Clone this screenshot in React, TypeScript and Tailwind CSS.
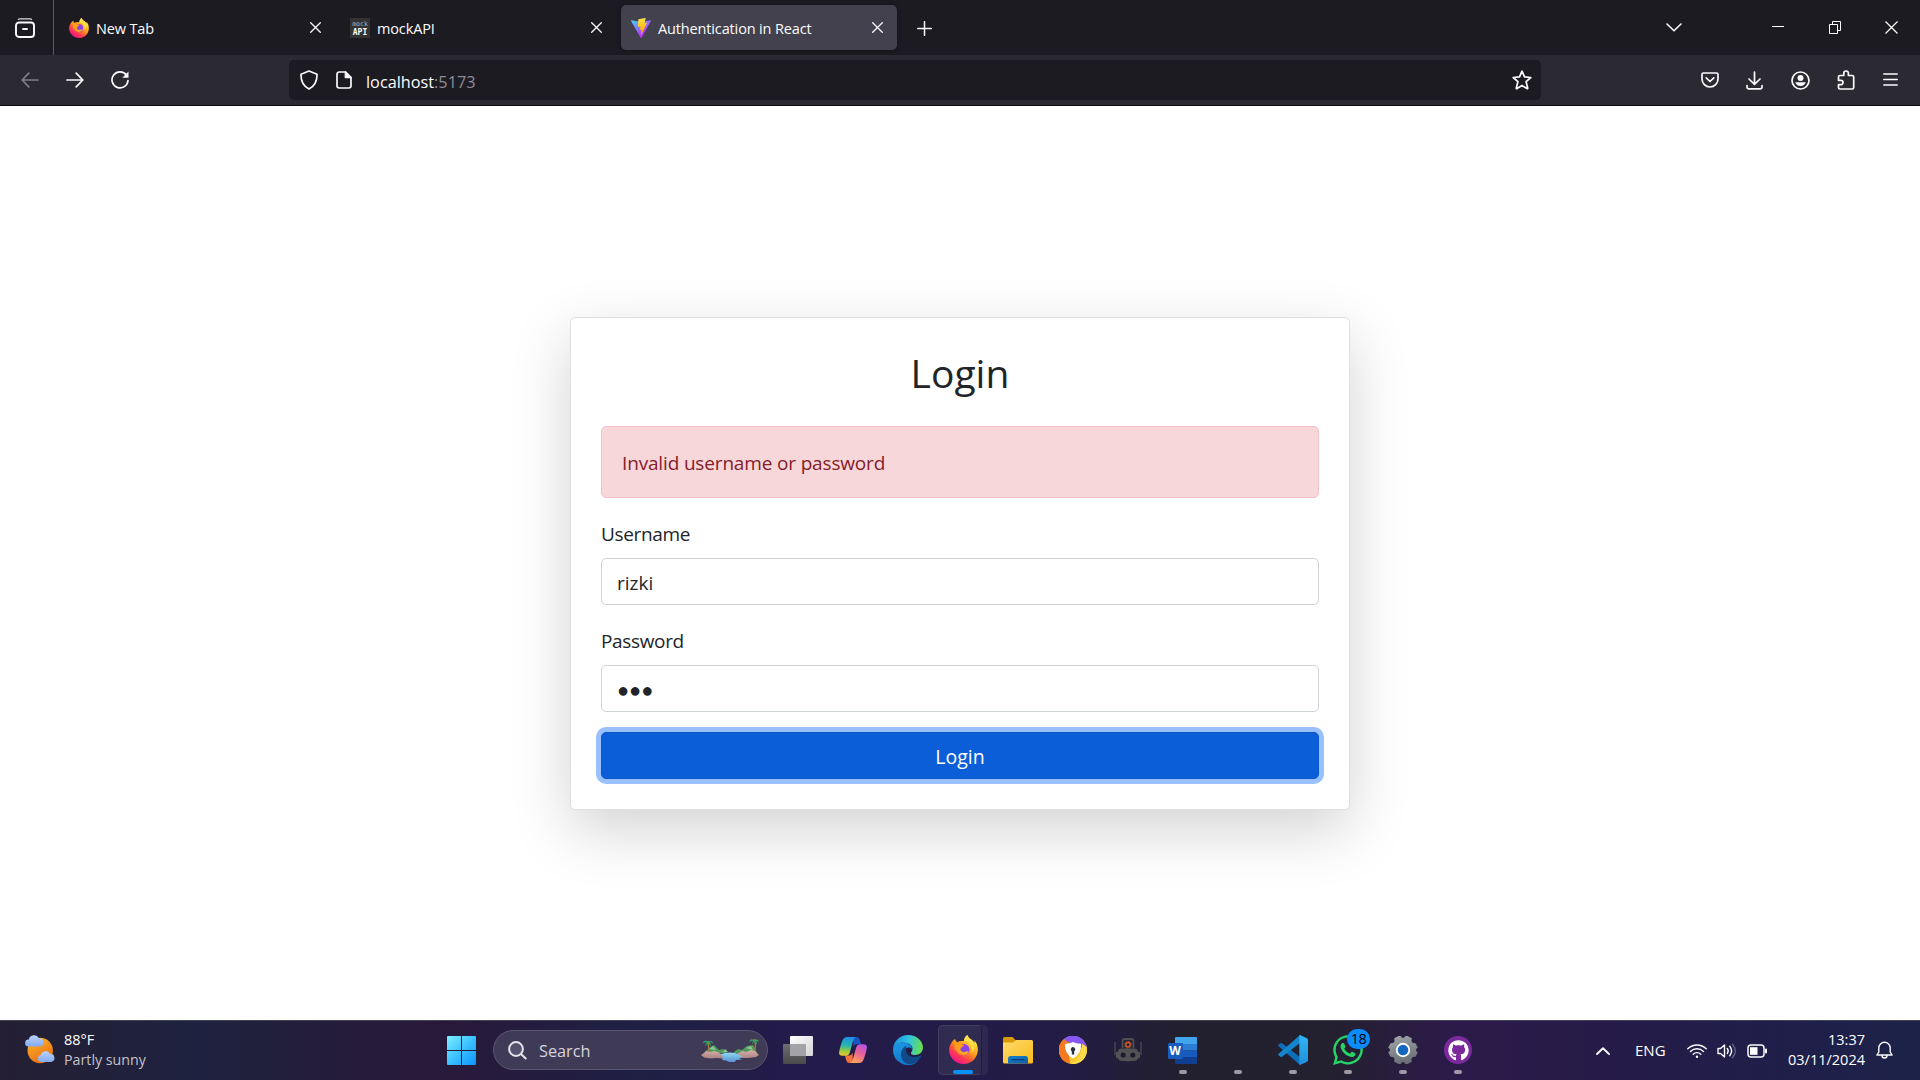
import type { ReactNode } from "react";
import { FaGithub, FaWhatsapp } from "react-icons/fa";

/* ---------- logos ---------- */

function FirefoxLogo({ size, id }: { size: number; id: string }) {
  return (
    <svg width={size} height={size} viewBox="0 0 32 32">
      <defs>
        <linearGradient id={id + "a"} x1="0.85" y1="0.1" x2="0.25" y2="0.95">
          <stop offset="0" stopColor="#fff44f" />
          <stop offset="0.25" stopColor="#ffc52a" />
          <stop offset="0.5" stopColor="#ff8a1f" />
          <stop offset="0.75" stopColor="#ff3c50" />
          <stop offset="1" stopColor="#f2128a" />
        </linearGradient>
        <linearGradient id={id + "b"} x1="0.6" y1="0" x2="0.4" y2="1">
          <stop offset="0" stopColor="#a13fe0" />
          <stop offset="1" stopColor="#6a48e8" />
        </linearGradient>
        <linearGradient id={id + "c"} x1="0" y1="0" x2="1" y2="1">
          <stop offset="0" stopColor="#ff980e" />
          <stop offset="1" stopColor="#ffa52e" />
        </linearGradient>
      </defs>
      <path
        fill={`url(#${id}a)`}
        d="M20.300 0c-2.600 1.600-3.600 4.400-3.700 6.400-2.100.1-4 .9-5.400 2C9 8.200 7.300 6.800 6.700 4.300 4.900 5.200 3.500 6.800 2.600 8.800.9 11 0 14 .2 17.300.8 25.600 7.600 32 16 32c8.800 0 15.800-7 15.800-15.800 0-4.200-1.400-8-4-10.400.4 1 .6 2 .6 2.900C26.200 4.600 21.400 4.300 20.300 0z"
      />
      <circle cx="16.200" cy="16" r="6.400" fill={`url(#${id}b)`} />
      <path
        fill={`url(#${id}c)`}
        d="M3 8.500c1.500-.8 3.500-.8 5.200-.1 2-1.500 4.500-2.200 7-1.700-1.700.8-2.600 2.300-2.500 3.300.7.600 3.500.5 3.800 1.100-.2 1.700-3.300 2.400-3.900 3.900-.3 2.600 2.300 4.200 4.800 3.600 1.600-.4 3-1 4.300-.2-1 2.500-3.700 4-6.600 3.800-4-.3-6.900-3.300-7-6.700-.7.700-1 1.700-1 2.800-1.600-2.800-1-6.200-.6-7.400z"
      />
      <path
        fill="#ffe14a"
        opacity="0.85"
        d="M20.300 0c-2.600 1.600-3.600 4.400-3.700 6.400 4 .2 7.500 3.100 7.900 7.200 1 2.400.5 5-.4 6.500 2.700-1.500 4.200-5 3.700-9.400C26.200 6 21.400 4.500 20.300 0z"
      />
    </svg>
  );
}

function ViteLogo() {
  return (
    <svg width="20" height="20" viewBox="0 0 256 257">
      <defs>
        <linearGradient id="va" x1="-0.828%" x2="57.636%" y1="7.652%" y2="78.411%">
          <stop offset="0" stopColor="#41d1ff" />
          <stop offset="1" stopColor="#bd34fe" />
        </linearGradient>
        <linearGradient id="vb" x1="43.376%" x2="50.316%" y1="2.242%" y2="89.03%">
          <stop offset="0" stopColor="#ffea83" />
          <stop offset="0.083" stopColor="#ffdd35" />
          <stop offset="1" stopColor="#ffa800" />
        </linearGradient>
      </defs>
      <path
        fill="url(#va)"
        d="M255.153 37.938L134.897 252.976c-2.483 4.440-8.862 4.466-11.382.048L.875 37.958c-2.746-4.814 1.371-10.646 6.827-9.670l120.385 21.517a6.537 6.537 0 0 0 2.322-.004l117.867-21.483c5.438-.991 9.574 4.796 6.877 9.620Z"
      />
      <path
        fill="url(#vb)"
        d="M185.432.063L96.440 17.501a3.268 3.268 0 0 0-2.634 3.014l-5.474 92.456a3.268 3.268 0 0 0 3.997 3.378l24.777-5.718c2.318-.535 4.413 1.507 3.936 3.838l-7.361 36.047c-.495 2.426 1.782 4.500 4.151 3.780l15.304-4.649c2.372-.720 4.652 1.360 4.150 3.788l-11.698 56.621c-.732 3.542 3.979 5.473 5.943 2.437l1.313-2.028l72.516-144.720c1.215-2.423-.880-5.186-3.540-4.672l-25.505 4.922c-2.396.462-4.435-1.770-3.759-4.114l16.646-57.705c.677-2.350-1.370-4.583-3.769-4.113Z"
      />
    </svg>
  );
}

/* ---------- browser chrome ---------- */

const line = {
  fill: "none",
  stroke: "#fbfbfe",
  strokeWidth: 1.7,
  strokeLinecap: "round" as const,
  strokeLinejoin: "round" as const,
};

function CloseX() {
  return (
    <svg width="11" height="11" viewBox="0 0 11 11" {...line} strokeWidth={1.3}>
      <path d="M.7.7l9.600 9.600M10.300.7L.7 10.300" />
    </svg>
  );
}

function Tab({ icon, title, wide, active }: { icon: ReactNode; title: string; wide?: boolean; active?: boolean }) {
  return (
    <div
      className={
        "flex h-[45px] items-center rounded-[5px] pl-[10px] " +
        (active ? "bg-[#42414d] shadow-[0_0_4px_rgba(0,0,0,0.4)] " : "") +
        (wide ? "w-[281px] pr-[19px]" : "w-[276px] pr-[14px]")
      }
    >
      <div className="flex size-5 items-center justify-center pt-[1px]">{icon}</div>
      <span className="flex-1 whitespace-nowrap pt-[2px] pl-[7px] text-[14.500px] leading-5 tracking-[-0.14px] text-[#fbfbfe]">
        {title}
      </span>
      <CloseX />
    </div>
  );
}

function TabStrip() {
  return (
    <div className="flex h-[55px] items-center bg-[#1c1b22]">
      <div className="flex h-full w-[54px] items-center border-r border-[#5b5b66] pt-[1px] pl-[15px]">
        <svg width="20" height="20" viewBox="0 0 20 20" {...line} strokeWidth={1.900}>
          <path d="M3.500 1.300Q4 .9 5 .9h10q1 0 1.500.4" strokeWidth={1.300} opacity={0.85} />
          <rect x="1" y="4.500" width="18" height="14.500" rx="3" />
          <path d="M8 11h4" />
        </svg>
      </div>
      <div className="flex pl-[5px]">
        <Tab wide icon={<FirefoxLogo size={20} id="ft" />} title="New Tab" />
        <Tab
          wide
          icon={
            <div className="flex size-5 flex-col items-center justify-center bg-[#333] font-['DejaVu_Sans_Mono',monospace]">
              <span className="text-[6.500px] leading-[8px] text-[#a3b3be]">mock</span>
              <span className="text-[8px] leading-[9px] font-bold text-white">API</span>
            </div>
          }
          title="mockAPI"
        />
        <Tab active icon={<ViteLogo />} title="Authentication in React" />
      </div>
      <svg className="mt-[2px] ml-5" width="15" height="15" viewBox="0 0 15 15" {...line} strokeWidth={1.500}>
        <path d="M7.500.7v13.600M.7 7.500h13.600" />
      </svg>
      <div className="flex-1" />
      <svg className="mr-[90px]" width="16" height="9" viewBox="0 0 16 9" {...line} strokeWidth={1.600}>
        <path d="M1 1l7 6.800L15 1" />
      </svg>
      <svg className="mr-[45px] -mt-[2px]" width="12" height="1" viewBox="0 0 12 1">
        <path d="M0 .5h12" stroke="#fff" />
      </svg>
      <svg className="mr-[44px]" width="12" height="13" viewBox="0 0 12 13" fill="none" stroke="#fff">
        <path d="M.5 3.500h8v9h-8zM3.500 3.500v-3h8v9h-3" />
      </svg>
      <svg className="mr-[22px]" width="13" height="13" viewBox="0 0 13 13" fill="none" stroke="#fff" strokeWidth={1.200}>
        <path d="M.5.5l12 12M12.500.5l-12 12" />
      </svg>
    </div>
  );
}

function Toolbar() {
  return (
    <div className="flex h-[51px] items-center border-b border-[#0c0c0d] bg-[#2b2a33]">
      <svg className="ml-[21px]" width="18" height="16" viewBox="0 0 18 16" {...line} opacity={0.4}>
        <path d="M17 8H1.200M7.800 1.200L1.200 8l6.600 6.800" />
      </svg>
      <svg className="ml-[27px]" width="18" height="16" viewBox="0 0 18 16" {...line}>
        <path d="M1 8h15.800M10.200 1.200L16.800 8l-6.600 6.800" />
      </svg>
      <svg className="ml-[27px]" width="18" height="18" viewBox="0 0 18 18" {...line}>
        <path d="M15.500 4.200A8 8 0 1 0 17 9.500" />
        <path d="M17.500.5v6.200h-6.200z" fill="#fbfbfe" stroke="none" />
      </svg>
      <div className="ml-[160px] flex h-10 w-[1252px] items-center rounded-[5px] bg-[#1c1b22] pr-[9px] pl-[11px]">
        <svg width="18" height="20" viewBox="0 0 18 20" {...line}>
          <path d="M9 1l8 3.200c.2 6-1.500 11.500-8 14.900C2.500 15.700.8 10.200 1 4.200z" />
        </svg>
        <svg className="ml-[18px]" width="16" height="18" viewBox="0 0 16 18" {...line}>
          <path d="M3.200 1h6.300L15 6.500v8.300a2.200 2.200 0 0 1-2.200 2.200H3.200A2.200 2.200 0 0 1 1 14.800V3.200A2.200 2.200 0 0 1 3.200 1z" />
          <path d="M9.500 1v5.500H15z" fill="#fbfbfe" />
        </svg>
        <span className="flex-1 pt-[4px] pl-[14px] text-[16.250px] leading-6 text-[#fbfbfe]">
          localhost<span className="text-[#8d8c96]">:5173</span>
        </span>
        <svg width="20" height="20" viewBox="0 0 20 20" {...line}>
          <path d="M10 1.200l2.500 5.700 6.300.6-4.700 4.200 1.600 6.300q.2 1-.7.600L10 15.600l-5 3q-.9.400-.7-.6l1.600-6.300L1.200 7.500l6.300-.6z" />
        </svg>
      </div>
      <div className="flex flex-1 items-center justify-end pr-[22px]">
        <svg width="18" height="16" viewBox="0 0 18 16" {...line}>
          <path d="M2.500 1h13Q17 1 17 2.500V7a8 8 0 0 1-16 0V2.500Q1 1 2.500 1zM5.200 5.800L9 9.500l3.800-3.700" />
        </svg>
        <svg className="ml-[27px]" width="17" height="19" viewBox="0 0 17 19" {...line}>
          <path d="M8.500 1v12M3 8l5.500 5.300L14 8M1 14.500v1.700q0 1.600 1.600 1.600h11.800q1.600 0 1.600-1.600v-1.700" />
        </svg>
        <svg className="ml-[28px]" width="19" height="19" viewBox="0 0 19 19" {...line}>
          <circle cx="9.500" cy="9.500" r="8.500" />
          <circle cx="9.500" cy="7" r="3" fill="#fbfbfe" stroke="none" />
          <path d="M4.300 11.300h10.400c-.6 2.300-2.600 3.800-5.200 3.800s-4.600-1.500-5.200-3.800z" fill="#fbfbfe" stroke="none" />
        </svg>
        <svg className="ml-[27px]" width="18" height="20" viewBox="0 0 18 20" {...line}>
          <path d="M6.800 5.500V3.300a2.300 2.300 0 0 1 4.600 0v2.200h3.800q1.500 0 1.500 1.500v10.500q0 1.500-1.500 1.500H3q-1.500 0-1.500-1.500v-2.800h2.300a2.200 2.200 0 0 0 0-4.400H1.500V7Q1.500 5.500 3 5.500z" />
        </svg>
        <svg className="ml-[28px] -mt-[1px]" width="15" height="13" viewBox="0 0 15 13" {...line} strokeWidth={1.500}>
          <path d="M.8 1h13.400M.8 6.500h13.400M.8 12h13.400" />
        </svg>
      </div>
    </div>
  );
}

/* ---------- page ---------- */

function Field({ label, children }: { label: string; children: ReactNode }) {
  return (
    <div className="mb-5">
      <div className="mb-[10px] h-[30px] pt-[1px] text-[19px] leading-[30px] tracking-[-0.35px]">{label}</div>
      <div className="h-[47px] rounded-[5px] border border-[#ced4da] bg-white pt-[1px] pl-[15px] leading-[46px]">
        {children}
      </div>
    </div>
  );
}

function LoginPage() {
  return (
    <main className="flex flex-1 items-center justify-center bg-white pt-[1px] text-[#212529]">
      <div className="w-[780px] rounded-[5px] border border-[#dfdfdf] bg-white p-[30px] shadow-[0_20px_60px_rgba(0,0,0,0.175)]">
        <h2 className="mb-[30px] h-12 pt-[1px] text-center text-[39px] leading-[48px]">Login</h2>
        <div className="mb-5 h-[72px] rounded-[5px] border border-[#f5c2c7] bg-[#f8d7da] pt-[1px] pl-5 text-[19px] leading-[70px] tracking-[-0.16px] text-[#842029]">
          Invalid username or password
        </div>
        <Field label="Username">
          <span className="text-[19px]">rizki</span>
        </Field>
        <Field label="Password">
          <span className="text-[20px]">●●●</span>
        </Field>
        <button className="block h-[47px] w-full rounded-[5px] border border-[#0a58ca] bg-[#0b5ed7] pt-[2px] text-[19.500px] leading-[44px] text-white shadow-[0_0_0_5px_#98c1fe]">
          Login
        </button>
      </div>
    </main>
  );
}

/* ---------- taskbar ---------- */

function WeatherIcon() {
  return (
    <svg width="30" height="30" viewBox="0 0 30 30">
      <defs>
        <linearGradient id="sun" x1="0.2" y1="0" x2="0.7" y2="1">
          <stop offset="0" stopColor="#f8b42a" />
          <stop offset="1" stopColor="#ee6a12" />
        </linearGradient>
        <linearGradient id="cloud" x1="0" y1="0" x2="0" y2="1">
          <stop offset="0" stopColor="#b9d2fb" />
          <stop offset="1" stopColor="#83aaf0" />
        </linearGradient>
      </defs>
      <circle cx="15.200" cy="15.500" r="12.700" fill="url(#sun)" />
      <path fill="url(#cloud)" d="M3.500 11.500a3.500 3.500 0 0 1 .3-7A5.500 5.500 0 0 1 14 3.200a4.200 4.200 0 0 1 1 8.300z" />
      <path fill="url(#cloud)" d="M15.500 27a3.600 3.600 0 0 1 .2-7 5 5 0 0 1 9.300-1.200A4.200 4.200 0 0 1 26.500 27z" />
    </svg>
  );
}

function StartIcon() {
  return (
    <svg width="29" height="29" viewBox="0 0 29 29">
      <defs>
        <linearGradient id="win" gradientUnits="userSpaceOnUse" x1="0" y1="0" x2="29" y2="29">
          <stop offset="0" stopColor="#7df0ff" />
          <stop offset="0.5" stopColor="#3cc0ff" />
          <stop offset="1" stopColor="#0a93f8" />
        </linearGradient>
      </defs>
      <path
        fill="url(#win)"
        d="M1 0h13v14H0V1Q0 0 1 0zM15 0h13q1 0 1 1v13H15zM0 15h14v14H1q-1 0-1-1zM15 15h14v13q0 1-1 1H15z"
      />
    </svg>
  );
}

function IslandsArt() {
  return (
    <svg width="58" height="26" viewBox="0 0 58 26">
      <defs>
        <linearGradient id="water" x1="0" y1="0" x2="0" y2="1">
          <stop offset="0" stopColor="#8fdcf2" />
          <stop offset="1" stopColor="#5a8fd0" />
        </linearGradient>
        <linearGradient id="rock" x1="0" y1="0" x2="0" y2="1">
          <stop offset="0" stopColor="#d9b3a6" />
          <stop offset="1" stopColor="#a97f86" />
        </linearGradient>
      </defs>
      <path fill="#4f9a5c" d="M4 15l4-4 5-3 5 5 4-1 4 4H5zM33 15l4-3 4 1 5-4 6-1 4 8H33z" />
      <path fill="#8fc79a" d="M8 12l4-3 3 4zM22 15l2-3 3 3zM45 11l5-2 2 4z" />
      <path d="M7.500 18Q8.500 10 6.500 4M54 13q1-6-.5-11" fill="none" stroke="#b07c3c" strokeWidth="1.300" />
      <path
        fill="#2fa866"
        d="M7 4.500Q3 2 1.200 7 3.500 4.500 6 5.500 4 7 4.500 9.500 6 6.500 7 6q2 1 2.500 3.500Q10.500 7 8.500 5.500q2.500-.8 4 1.500Q11.500 2.500 7 4.500zM53.500 3Q49.500.5 48 5.500q2.300-2.300 4.500-1.500-1.700 1.300-1.400 3.700Q52.500 5 53.500 4.500q2 1 2.400 3.500.9-2.500-.9-4 2-.5 3 1.500Q57.500 1 53.500 3z"
      />
      <path fill="url(#rock)" d="M0 18l3-2 2-2 4 1 4-1 4 1 3 2 4 1 3 3-6 .5-5-.5-7 .5-6-1zM34 17l4-1 3-2 4 1 5-2 4 1 2 2 2 2-3 2-7 1h-8l-6-1z" />
      <path fill="url(#water)" d="M20 17q6-2.500 14-1l8 3.500-4 1.500 3 1.500-6 .5-1 2h-6l-3-1.500-4-.5 1-2z" />
    </svg>
  );
}

function TaskViewIcon() {
  return (
    <svg width="30" height="28" viewBox="0 0 30 28">
      <defs>
        <linearGradient id="tv1" x1="0" y1="0" x2="1" y2="1">
          <stop offset="0" stopColor="#ffffff" />
          <stop offset="1" stopColor="#d4d4d8" />
        </linearGradient>
        <linearGradient id="tv2" x1="0" y1="0" x2="0" y2="1">
          <stop offset="0" stopColor="#6e6c70" />
          <stop offset="1" stopColor="#4a494c" />
        </linearGradient>
      </defs>
      <rect x="0" y="8" width="23" height="20" rx="1" fill="url(#tv2)" />
      <rect x="7" y="0" width="23" height="20" rx="1" fill="url(#tv1)" />
      <path d="M7 8h15q1 0 1 1v11H8q-1 0-1-1z" fill="#a3a2a6" />
    </svg>
  );
}

function CopilotIcon() {
  return (
    <svg width="28" height="26" viewBox="0 0 28 26">
      <defs>
        <linearGradient id="cp1" x1="0.4" y1="0" x2="0.3" y2="1">
          <stop offset="0" stopColor="#1f8fe8" />
          <stop offset="0.45" stopColor="#27b5b0" />
          <stop offset="0.75" stopColor="#9ccb3b" />
          <stop offset="1" stopColor="#f0c531" />
        </linearGradient>
        <linearGradient id="cp2" x1="0.8" y1="0" x2="0.3" y2="1">
          <stop offset="0" stopColor="#b154e8" />
          <stop offset="0.45" stopColor="#e8609a" />
          <stop offset="1" stopColor="#ffa45c" />
        </linearGradient>
      </defs>
      <path fill="#1a55c8" d="M14 0h3.500q2.500 0 3.200 2.500L22 7h-4q-2.500 0-3.500 3z" />
      <path fill="#f2713e" d="M14 26h-3.500Q8 26 7.300 23.500L6 18.500h4q2.500 0 3.500-3z" />
      <path
        fill="url(#cp1)"
        d="M8 0h9q-2 .7-2.800 3.500l-3.400 12Q9.800 18.700 7 18.700H3.300Q-.6 18.700.2 14.500.9 10.500 3 4.500 4.500 0 8 0z"
      />
      <path
        fill="url(#cp2)"
        d="M20 26h-9q2-.7 2.800-3.500l3.400-12Q18.200 7.300 21 7.300h3.700q3.900 0 3.100 4.200-.7 4-2.800 10Q23.500 26 20 26z"
      />
    </svg>
  );
}

function EdgeIcon() {
  return (
    <svg width="30" height="30" viewBox="0 0 30 30">
      <defs>
        <linearGradient id="ed1" x1="0" y1="0.400" x2="1" y2="0.500">
          <stop offset="0" stopColor="#1b8fe0" />
          <stop offset="0.5" stopColor="#2fc3e0" />
          <stop offset="1" stopColor="#6be04a" />
        </linearGradient>
        <linearGradient id="ed2" x1="0" y1="0" x2="0.6" y2="1">
          <stop offset="0" stopColor="#1f9be6" />
          <stop offset="1" stopColor="#1270c8" />
        </linearGradient>
      </defs>
      <path fill="url(#ed2)" d="M0 14C1 9 6 7.500 10.500 7.500c5 0 8.500 3 8.500 6.500-3-3-8-1-8.500 3.500-.5 6 6 10.500 14.500 8.700A15 15 0 0 1 0 15z" />
      <path fill="#114a8b" d="M8 19.500c0-4.500 2.500-7.500 5.500-8.800-2 4.300 0 11.300 7.500 11.300 3 0 5-1 6.500-1.500.7 0 .8.600.4 1.200C26 25.500 21 29.500 15.500 29 11 28 8 24.500 8 19.500z" />
      <path
        fill="url(#ed1)"
        d="M0 14A15 15 0 0 1 15 0c9 0 15 6.200 15 12.500 0 4.500-3.500 7.500-7.700 7.500-3.200 0-4.800-1.200-4.300-2.200.5-.9 1.500-2 1.500-4 0-3.500-4-6.300-9-6.300C5.500 7.500 1 10 0 14z"
      />
    </svg>
  );
}

function FolderIcon() {
  return (
    <svg width="30" height="27" viewBox="0 0 30 27">
      <defs>
        <linearGradient id="fo" x1="0" y1="0" x2="1" y2="1">
          <stop offset="0" stopColor="#ffdb6b" />
          <stop offset="1" stopColor="#fbbb1a" />
        </linearGradient>
        <linearGradient id="fb" x1="0" y1="0" x2="1" y2="1">
          <stop offset="0" stopColor="#1a80c8" />
          <stop offset="1" stopColor="#0d5ca8" />
        </linearGradient>
      </defs>
      <path fill="#d99a06" d="M1.500 0h8L13 3.500V8H0V1.500Q0 0 1.500 0z" />
      <path fill="url(#fo)" d="M0 5.500h10L13 3h15.500Q30 3 30 4.500V25q0 1.500-1.500 1.500h-27Q0 26.500 0 25z" />
      <path fill="url(#fb)" d="M7.500 19h15q2.500 0 2.500 2.500v5H5v-5Q5 19 7.500 19z" />
      <path d="M9 22.700h12" stroke="#0a3f7c" strokeWidth="1.300" strokeLinecap="round" />
    </svg>
  );
}

function ShieldBrowserIcon() {
  return (
    <svg width="28" height="28" viewBox="0 0 28 28">
      <circle cx="14" cy="14" r="14" fill="#f7c92e" />
      <path d="M14 14L5 3A14 14 0 0 1 27.500 10.500z" fill="#8557f5" />
      <path d="M5 3a14 14 0 0 0 6 24.700L9 12Q9 6 14 3z" fill="#f47a20" />
      <path d="M5 3.300A14 14 0 0 1 27.600 11Q22 3.500 9 6z" fill="#8557f5" />
      <path d="M27.600 11a14 14 0 0 1-16 16.800Q23 23 23 7.500z" fill="#fbdc48" />
      <path d="M14 6q3.500 2 8 1.800 1 9.700-8 14.700-9-5-8-14.700Q10.500 8 14 6z" fill="#fff" />
      <path d="M14 11a2.300 2.300 0 0 1 1.200 4.200v3.300h-2.400v-3.300A2.300 2.300 0 0 1 14 11z" fill="#27303f" />
    </svg>
  );
}

function RobotIcon() {
  return (
    <svg width="28" height="24" viewBox="0 0 28 24">
      <path d="M1 4v13M27 4v13" stroke="#47464d" strokeWidth="1.500" />
      <path d="M8.500 10V3q0-2 2-2h7q2 0 2 2v7" fill="#262533" stroke="#4e4e55" strokeWidth="1.800" />
      <circle cx="14" cy="6.800" r="2.300" fill="none" stroke="#c9592a" strokeWidth="1.500" />
      <circle cx="14" cy="6.800" r="3.300" fill="none" stroke="#c9592a" strokeWidth="1" strokeDasharray="1.300 1.290" />
      <path d="M4 14q0-3.500 3.500-3.500h13Q24 10.500 24 14h2v6h-2q0 1.500-2 2.500-8 1.500-16 0-2-1-2-2.500H2v-6z" fill="#525255" />
      <circle cx="9.200" cy="17" r="2.600" fill="#1d1c2c" />
      <circle cx="18.800" cy="17" r="2.600" fill="#1d1c2c" />
    </svg>
  );
}

function WordIcon() {
  return (
    <div className="relative mr-[2px] h-[27px] w-[29px]">
      <svg width="29" height="27" viewBox="0 0 29 27">
        <path fill="#41a5ee" d="M7 1q0-1 1-1h20q1 0 1 1v6H7z" />
        <path fill="#2b7cd3" d="M7 7h22v6.500H7z" />
        <path fill="#185abd" d="M7 13.500h22V20H7z" />
        <path fill="#103f91" d="M7 20h22v6q0 1-1 1H8q-1 0-1-1z" />
      </svg>
      <span className="absolute top-[6px] left-0 flex h-4 w-[15px] items-center justify-center rounded-[1px] bg-[#185abd] text-[12px] leading-none font-bold text-white">
        W
      </span>
    </div>
  );
}

function VsCodeIcon() {
  return (
    <svg width="30" height="30" viewBox="0 0 30 30">
      <defs>
        <linearGradient id="vsr" x1="0" y1="0" x2="0" y2="1">
          <stop offset="0" stopColor="#32b5f5" />
          <stop offset="1" stopColor="#1f90dc" />
        </linearGradient>
      </defs>
      <path fill="#0a6fb8" d="M.6 9.800l1.800-1.600q.8-.6 1.700 0L22 22v8L.6 11.300q-.7-.8 0-1.500z" />
      <path fill="#1485cc" d="M.6 20.200l1.800 1.600q.8.600 1.700 0L22 8V0L.6 18.700q-.7.800 0 1.500z" />
      <path fill="url(#vsr)" d="M22 0l7 3.200q1 .5 1 1.600v20.400q0 1.100-1 1.600L22 30q-.7 0-.7-1V1q0-1 .7-1z" />
    </svg>
  );
}

function SettingsIcon() {
  return (
    <svg width="30" height="28" viewBox="0 0 30 28">
      <defs>
        <linearGradient id="ge" x1="0" y1="0" x2="0.3" y2="1">
          <stop offset="0" stopColor="#a0a7ab" />
          <stop offset="1" stopColor="#6b7176" />
        </linearGradient>
      </defs>
      <path
        fill="url(#ge)"
        d="M10.500 0h2.200q1 2 2.300 2t2.300-2h2.200l4.300 2.300q-.7 3 .2 4t3.500 1l2.300 4.300q-1.800 1.300-1.800 2.400t1.800 2.400l-2.300 4.300q-2.600 0-3.500 1t-.2 4L19.500 28h-2.200q-1-2-2.300-2t-2.300 2h-2.200l-4.300-2.300q.7-3-.2-4t-3.500-1L.2 16.400Q2 15.100 2 14T.2 11.600l2.300-4.300q2.600 0 3.500-1t.2-4z"
      />
      <circle cx="15" cy="14" r="7.200" fill="#fff" />
      <circle cx="15" cy="14" r="5.300" fill="#1467c0" />
    </svg>
  );
}

function WhatsAppIcon() {
  return (
    <div className="relative">
      <FaWhatsapp className="size-[34px] text-[#25d366]" />
      <span className="absolute -top-[4px] left-[16px] flex h-5 w-[23px] items-center justify-center rounded-full bg-[#0a8cff] text-[14.500px] leading-none tracking-[-0.600px] text-black">
        18
      </span>
    </div>
  );
}

function TaskCell({ children, running }: { children?: ReactNode; running?: boolean }) {
  return (
    <div className="flex w-[55px] flex-col items-center pt-[14px]">
      <div className="flex h-[30px] items-center justify-center">{children}</div>
      {running && <div className="mt-[5px] h-1 w-2 rounded-full bg-[#9c99a5]" />}
    </div>
  );
}

function ActiveTaskCell({ children }: { children: ReactNode }) {
  return (
    <div className="flex w-[55px] justify-center pt-[4px]">
      <div className="relative flex h-[50px] w-[50px] flex-col items-center rounded-[5px] bg-[#2e2851] pt-[9px]">
        <div className="absolute inset-y-0 left-0 w-11 rounded-[5px] border border-[#433e60] border-r-[#201a40] bg-[#302b50]" />
        <div className="relative flex h-[30px] items-center">{children}</div>
        <div className="relative mt-[6px] h-1 w-5 rounded-full bg-[#0a90fa]" />
      </div>
    </div>
  );
}

function Tray() {
  return (
    <div className="flex h-full flex-1 items-center justify-end pr-[27px] text-white">
      <svg width="14" height="8" viewBox="0 0 14 8" {...line} strokeWidth={1.900}>
        <path d="M1 7l6-5.800L13 7" />
      </svg>
      <span className="ml-[25px] w-[52px] pb-[2px] text-[15px] leading-5">ENG</span>
      <svg width="20" height="16" viewBox="0 0 20 16" {...line} strokeWidth={1.400}>
        <path d="M.8 5.800a13 13 0 0 1 18.400 0M3.500 8.500a9.200 9.200 0 0 1 13 0M6.200 11.200a5.400 5.400 0 0 1 7.600 0" />
        <circle cx="10" cy="13.800" r="1.200" fill="#fff" stroke="none" />
      </svg>
      <svg className="ml-[10px]" width="20" height="16" viewBox="0 0 20 16" {...line} strokeWidth={1.400}>
        <path d="M1 5.500h2.500L7.500 2v12l-4-3.500H1zM10.300 5.500q1.800 2.500 0 5M12.800 3.300q3.600 4.700 0 9.400" />
        <path d="M15.500 1.200q5.500 6.800 0 13.600" opacity={0.3} />
      </svg>
      <svg className="ml-[10px]" width="20" height="14" viewBox="0 0 20 14" {...line} strokeWidth={1.500}>
        <rect x="1" y="1" width="16" height="12" rx="3" />
        <rect x="3" y="3.200" width="7.500" height="7.600" fill="#fff" stroke="none" />
        <path d="M19 5.500v3" strokeWidth={2} />
      </svg>
      <div className="w-[98px] pb-[2px] text-right text-[14.500px] leading-5">
        <p>13:37</p>
        <p>03/11/2024</p>
      </div>
      <svg className="ml-[11px] -mt-[1px]" width="17" height="18" viewBox="0 0 17 18" {...line} strokeWidth={1.400}>
        <path d="M2.800 7a5.700 5.700 0 0 1 11.400 0v4l1.900 3H.9l1.900-3zM6 14.500a2.500 2.500 0 0 0 5 0" />
      </svg>
    </div>
  );
}

function Taskbar() {
  return (
    <footer className="flex h-[60px] items-stretch border-t border-[#43434f] bg-[linear-gradient(90deg,#241f33_0px,#1e2240_200px,#231f3a_290px,#28193a_440px,#1f2044_640px,#231b4a_780px,#231c46_1060px,#22202f_1180px,#23202f_1330px,#2c1b4a_1450px,#261b48_1600px,#1f1f4a_1800px,#1d2348_1920px)]">
      <div className="flex w-[434px] items-center pb-[2px] pl-[25px]">
        <WeatherIcon />
        <div className="ml-[9px] leading-5">
          <p className="text-[14.500px] text-white">88°F</p>
          <p className="text-[14.250px] text-[#c4c2cc]">Partly sunny</p>
        </div>
      </div>
      <TaskCell>
        <StartIcon />
      </TaskCell>
      <div className="mt-[9px] mr-[2.500px] ml-1 flex h-10 w-[275px] items-center rounded-full border border-[#5b5674] bg-[#3f3b57] pr-2 pl-[14px]">
        <svg width="19" height="19" viewBox="0 0 19 19" fill="#54516e" stroke="#e4e3ea" strokeWidth="2" strokeLinecap="round">
          <circle cx="8" cy="8" r="6.900" />
          <path d="M13.200 13.200L17.700 17.500" />
        </svg>
        <span className="flex-1 pt-[2px] pl-3 text-[16.250px] leading-5 text-[#d6d4de]">Search</span>
        <IslandsArt />
      </div>
      <TaskCell>
        <TaskViewIcon />
      </TaskCell>
      <TaskCell>
        <CopilotIcon />
      </TaskCell>
      <TaskCell>
        <EdgeIcon />
      </TaskCell>
      <ActiveTaskCell>
        <FirefoxLogo size={29} id="fb1" />
      </ActiveTaskCell>
      <TaskCell>
        <FolderIcon />
      </TaskCell>
      <TaskCell>
        <ShieldBrowserIcon />
      </TaskCell>
      <TaskCell>
        <RobotIcon />
      </TaskCell>
      <TaskCell running>
        <WordIcon />
      </TaskCell>
      <TaskCell running />
      <TaskCell running>
        <VsCodeIcon />
      </TaskCell>
      <TaskCell running>
        <WhatsAppIcon />
      </TaskCell>
      <TaskCell running>
        <SettingsIcon />
      </TaskCell>
      <TaskCell running>
        <div className="flex size-7 items-center justify-center rounded-full bg-[#7a2a9c]">
          <FaGithub className="size-[21px] text-white" />
        </div>
      </TaskCell>
      <Tray />
    </footer>
  );
}

export default function App() {
  return (
    <div className="flex h-[1080px] w-[1920px] flex-col overflow-hidden bg-white font-['Open_Sans',sans-serif]">
      <TabStrip />
      <Toolbar />
      <LoginPage />
      <Taskbar />
    </div>
  );
}
